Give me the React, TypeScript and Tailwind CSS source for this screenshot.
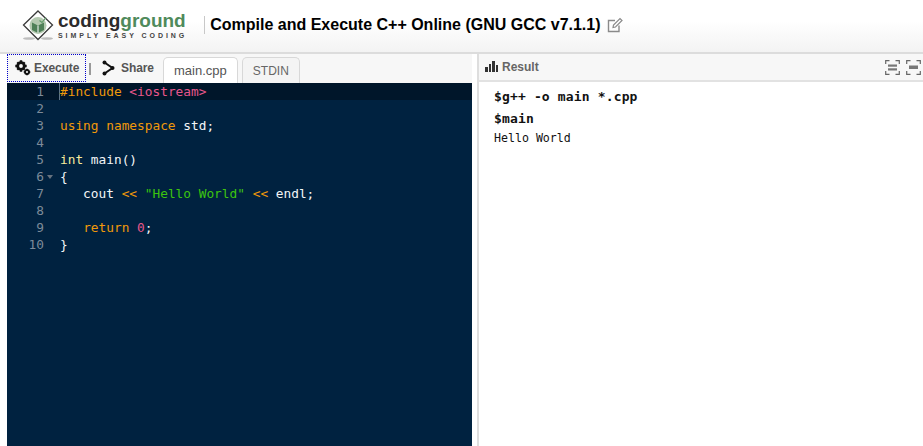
import { Fragment } from "react";

const mono = "font-['DejaVu_Sans_Mono','Liberation_Mono',monospace]";
const sans = "font-['Liberation_Sans',Arial,sans-serif]";

const orange = "text-[#f0990a]";
const pink = "text-[#e8568a]";
const white = "text-[#f2f5f7]";

type Token = [string, string];

const lines: Token[][] = [
  [[orange, "#include"], [white, " "], [pink, "<iostream>"]],
  [],
  [[orange, "using namespace"], [white, " std;"]],
  [],
  [["text-[#f7eb9c]", "int"], [white, " main()"]],
  [[white, "{"]],
  [[white, "   cout "], [orange, "<<"], [white, " "], ["text-[#3cc40e]", "\"Hello World\""], [white, " "], [orange, "<<"], [white, " endl;"]],
  [],
  [[white, "   "], [orange, "return"], [white, " "], [pink, "0"], [white, ";"]],
  [[white, "}"]],
];

function Logo() {
  return (
    <div className="flex items-center">
      <svg width="32" height="32" viewBox="0 0 32 32" className="mr-[4px] mt-[2px]">
        <ellipse cx="7" cy="28.500" rx="6" ry="1.300" fill="#bdbdbd" />
        <ellipse cx="25" cy="28.500" rx="6" ry="1.300" fill="#bdbdbd" />
        <path d="M16 1 L30.500 15 L16 29.500 L1.500 15 Z" fill="#fff" stroke="#3a3a3a" strokeWidth="1.300" />
        <circle cx="16" cy="15.500" r="8.500" fill="#b4c9b0" />
        <path d="M10 12.500 L16 15.500 L22 12.500 L22 20 L16 23 L10 20 Z" fill="#4f8058" />
        <path d="M16 15.500 V23" stroke="#fff" strokeWidth="1" />
        <path d="M17.500 10.500 L20 12.500 L24 7.500" stroke="#5f9a68" strokeWidth="1.200" fill="none" />
      </svg>
      <div className="flex flex-col">
        <div className={`${sans} flex h-[19px] items-center text-[19px] font-bold leading-none`}>
          <span className="text-[#2b2b2b]">coding</span>
          <span className="text-[#4f8a5b]">ground</span>
        </div>
        <div className={`${sans} mt-[1px] text-[7px] font-bold leading-[9px] tracking-[2.95px] text-[#444]`}>SIMPLY EASY CODING</div>
      </div>
    </div>
  );
}

function Gears() {
  return (
    <svg width="16" height="16" viewBox="0 0 16 16" fill="#111">
      <circle cx="6" cy="6" r="3.300" fill="none" stroke="#111" strokeWidth="2.800" />
      <path d="M4.800 .3h2.400v2.400H4.800zM4.800 9.300h2.400v2.400H4.800zM.3 4.800h2.400v2.400H.3zM9.300 4.800h2.400v2.400H9.300zM1.500 3.100l1.600-1.600 1.400 1.400-1.600 1.600zM7.500 9.100l1.600-1.600 1.400 1.400-1.600 1.600zM1.500 8.900l1.600 1.600 1.400-1.400-1.600-1.600zM7.500 2.900l1.600 1.600 1.400-1.400-1.600-1.600z" />
      <circle cx="12" cy="12" r="2" fill="none" stroke="#111" strokeWidth="1.900" />
      <path d="M11.200 8.700h1.600v1.600h-1.600zM11.200 13.700h1.600v1.600h-1.600zM8.700 11.200h1.600v1.600H8.700zM13.700 11.200h1.600v1.600h-1.600z" />
    </svg>
  );
}

function ShareIcon() {
  return (
    <svg width="13" height="16" viewBox="0 0 13 16">
      <path d="M2.500 2.500 L10.500 8 L2.500 13.500" fill="none" stroke="#111" strokeWidth="2" />
      <circle cx="2.500" cy="2.500" r="2" fill="#111" />
      <circle cx="10.500" cy="8" r="2" fill="#111" />
      <circle cx="2.500" cy="13.500" r="2" fill="#111" />
    </svg>
  );
}

function BarsIcon() {
  return (
    <svg width="14" height="12" viewBox="0 0 14 12" fill="#333">
      <rect x="0" y="6" width="3" height="5" />
      <rect x="4" y="3" width="2" height="8" />
      <rect x="7" y="0" width="3" height="11" />
      <rect x="11" y="4" width="2" height="7" />
    </svg>
  );
}

function FrameIcon({ double }: { double?: boolean }) {
  return (
    <svg width="15" height="15" viewBox="0 0 15 15" fill="none">
      <path d="M.7 4V.7H4.500M10.500 .7H14.300V4M.7 11V14.300H4.500M10.500 14.300H14.300V11" stroke="#666" strokeWidth="1.200" />
      {double ? (
        <>
          <rect x="3" y="4.500" width="9" height="2.200" fill="#777" />
          <rect x="3" y="8.300" width="9" height="2.200" fill="#777" />
        </>
      ) : (
        <rect x="3" y="5.500" width="9" height="3.500" fill="#777" />
      )}
    </svg>
  );
}

function EditIcon() {
  return (
    <svg width="16" height="16" viewBox="0 0 16 16" fill="none" stroke="#8a8a8a">
      <path d="M12 8.500V14.500H1.500V3.500H8" strokeWidth="1.400" />
      <path d="M6 10.500 L6.500 8 L13 1.500 L15 3.500 L8.500 10 Z" strokeWidth="1.200" />
    </svg>
  );
}

export default function App() {
  return (
    <div className={`${sans} flex h-[446px] w-[923px] flex-col overflow-hidden bg-white`}>
      <header className="flex h-[54px] shrink-0 items-center border-b-2 border-[#dcdcdc] bg-gradient-to-b from-white from-40% to-[#f3f3f3] pb-[2px] pl-[22px]">
        <Logo />
        <div className="ml-[17px] mr-[5px] h-[18px] w-px bg-[#c8c8c8]" />
        <h1 className="text-[16px] font-bold leading-none text-black">Compile and Execute C++ Online (GNU GCC v7.1.1)</h1>
        <div className="ml-[6px]">
          <EditIcon />
        </div>
      </header>

      <div className="flex min-h-0 flex-1">
        <div className="flex w-[472px] shrink-0 flex-col pl-[7px]">
          <div className="flex h-[29px] shrink-0 items-end bg-[#f7f7f7]">
            <button className="flex h-[28px] w-[79px] items-center gap-[3px] self-start border border-dotted border-[#0000cc] pl-[7px] text-[12px] font-bold tracking-[-0.1px] text-[#555]">
              <Gears />
              Execute
            </button>
            <div className="mx-[3px] mb-[8px] h-[12px] w-[2px] bg-[#999]" />
            <button className="flex h-[28px] items-center gap-[6px] self-start pl-[8px] text-[12px] font-bold tracking-[-0.1px] text-[#555]">
              <ShareIcon />
              Share
            </button>
            <div className="ml-[9px] flex h-[26px] w-[75px] items-center justify-center rounded-t-[5px] border border-b-0 border-[#d8d8d8] bg-white text-[13px] text-[#555]">main.cpp</div>
            <div className="ml-[4px] flex h-[26px] w-[58px] items-center justify-center rounded-t-[5px] border border-b-0 border-[#d8d8d8] bg-[#f4f4f4] text-[12px] text-[#666]">STDIN</div>
          </div>

          <div className={`${mono} min-h-0 flex-1 bg-[#002240] text-[12.8px] leading-[17px]`}>
            {lines.map((tokens, i) => (
              <div key={i} className={`flex h-[17px] ${i === 0 ? "bg-[#00162a]" : ""}`}>
                <div className="relative w-[37px] shrink-0 text-right text-[#7d8b99]">
                  {i + 1}
                  {i === 5 && <span className="absolute left-[40px] top-[7px] h-0 w-0 border-x-[3px] border-t-[4px] border-x-transparent border-t-[#66727e]" />}
                </div>
                <div className={`whitespace-pre ${i === 0 ? "ml-[15px] border-l border-[#5f7487]" : "ml-[16px]"}`}>
                  {tokens.map(([cls, text], j) => (
                    <Fragment key={j}>
                      <span className={cls}>{text}</span>
                    </Fragment>
                  ))}
                </div>
              </div>
            ))}
          </div>
        </div>

        <div className="w-[7px] shrink-0 border-r-2 border-[#dedede] bg-white" />

        <div className="flex min-w-0 flex-1 flex-col">
          <div className="flex h-[28px] shrink-0 items-center justify-between border-b-2 border-[#e2e2e2] bg-[#f7f7f7] pl-[6px] pr-[2px]">
            <div className="flex items-center gap-[3px] text-[12px] font-bold text-[#666]">
              <BarsIcon />
              Result
            </div>
            <div className="flex gap-[6px]">
              <FrameIcon double />
              <FrameIcon />
            </div>
          </div>
          <div className={`${mono} pl-[15px] pt-[8px] text-[#111]`}>
            <div className="text-[13px] font-bold leading-[14px] tracking-[0.15px]">$g++ -o main *.cpp</div>
            <div className="mt-[8px] text-[13px] font-bold leading-[14px] tracking-[0.15px]">$main</div>
            <div className="mt-[5px] text-[11.6px] leading-[14px]">Hello World</div>
          </div>
        </div>
      </div>
    </div>
  );
}
